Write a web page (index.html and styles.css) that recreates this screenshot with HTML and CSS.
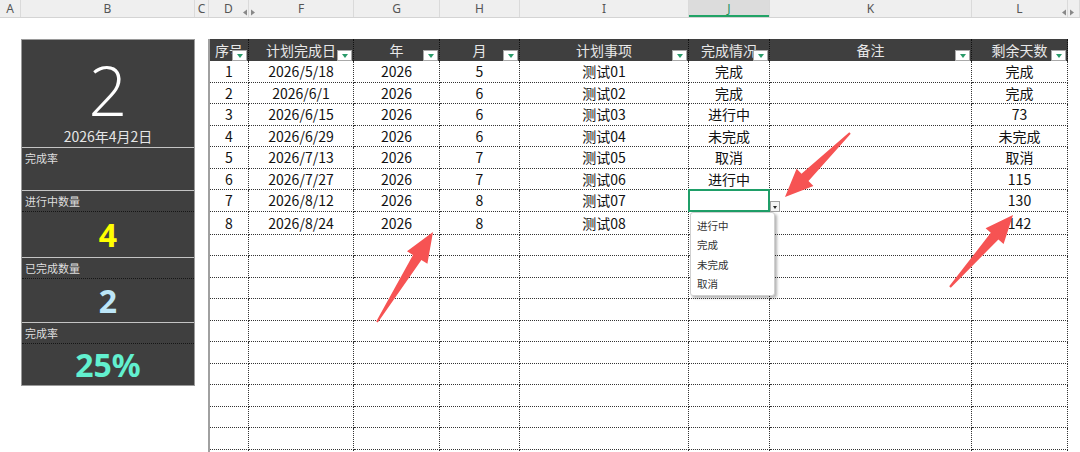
FILE: index.html
```html
<!DOCTYPE html>
<html lang="zh-CN">
<head>
    <meta charset="UTF-8">
    <title>计划完成表</title>
    <link rel="stylesheet" href="styles.css">
</head>
<body>
    <div class="colbar">
        <div>A</div>
        <div>B</div>
        <div>C</div>
        <div>D</div>
        <div>F<svg class="hid" width="12" height="7" viewBox="0 0 12 7"><polygon points="0,3.5 4,0.5 4,6.5"/><polygon points="8,0.5 12,3.5 8,6.5"/></svg></div>
        <div>G</div>
        <div>H</div>
        <div>I</div>
        <div class="cur">J</div>
        <div>K</div>
        <div>L</div>
        <div><svg class="hid" width="12" height="7" viewBox="0 0 12 7"><polygon points="0,3.5 4,0.5 4,6.5"/><polygon points="8,0.5 12,3.5 8,6.5"/></svg></div>
    </div>

    <div class="sheet">
        <div class="panel">
            <div class="hero">
                <div class="big">2</div>
                <div class="date">2026年4月2日</div>
            </div>
            <div class="stat empty">
                <div class="lbl">完成率</div>
            </div>
            <div class="stat">
                <div class="lbl">进行中数量</div>
                <div class="val val-a yellow">4</div>
            </div>
            <div class="stat">
                <div class="lbl">已完成数量</div>
                <div class="val val-b blue">2</div>
            </div>
            <div class="stat">
                <div class="lbl">完成率</div>
                <div class="val val-c aqua">25%</div>
            </div>
        </div>

        <div class="grid">
            <div class="th">序号<span class="flt"></span></div>
            <div class="th">计划完成日<span class="flt"></span></div>
            <div class="th">年<span class="flt"></span></div>
            <div class="th">月<span class="flt"></span></div>
            <div class="th">计划事项<span class="flt"></span></div>
            <div class="th">完成情况<span class="flt"></span></div>
            <div class="th">备注<span class="flt"></span></div>
            <div class="th">剩余天数<span class="flt"></span></div>

            <div>1</div><div>2026/5/18</div><div>2026</div><div>5</div><div>测试01</div><div>完成</div><div></div><div>完成</div>
            <div>2</div><div>2026/6/1</div><div>2026</div><div>6</div><div>测试02</div><div>完成</div><div></div><div>完成</div>
            <div>3</div><div>2026/6/15</div><div>2026</div><div>6</div><div>测试03</div><div>进行中</div><div></div><div>73</div>
            <div>4</div><div>2026/6/29</div><div>2026</div><div>6</div><div>测试04</div><div>未完成</div><div></div><div>未完成</div>
            <div>5</div><div>2026/7/13</div><div>2026</div><div>7</div><div>测试05</div><div>取消</div><div></div><div>取消</div>
            <div>6</div><div>2026/7/27</div><div>2026</div><div>7</div><div>测试06</div><div>进行中</div><div></div><div>115</div>
            <div>7</div><div>2026/8/12</div><div>2026</div><div>8</div><div>测试07</div>
            <div class="sel">
                <span class="dd-btn"></span>
                <ul class="dd-list">
                    <li>进行中</li>
                    <li>完成</li>
                    <li>未完成</li>
                    <li>取消</li>
                </ul>
            </div>
            <div></div><div>130</div>
            <div>8</div><div>2026/8/24</div><div>2026</div><div>8</div><div>测试08</div><div></div><div></div><div>142</div>

            <div></div><div></div><div></div><div></div><div></div><div></div><div></div><div></div>
            <div></div><div></div><div></div><div></div><div></div><div></div><div></div><div></div>
            <div></div><div></div><div></div><div></div><div></div><div></div><div></div><div></div>
            <div></div><div></div><div></div><div></div><div></div><div></div><div></div><div></div>
            <div></div><div></div><div></div><div></div><div></div><div></div><div></div><div></div>
            <div></div><div></div><div></div><div></div><div></div><div></div><div></div><div></div>
            <div></div><div></div><div></div><div></div><div></div><div></div><div></div><div></div>
            <div></div><div></div><div></div><div></div><div></div><div></div><div></div><div></div>
            <div></div><div></div><div></div><div></div><div></div><div></div><div></div><div></div>
            <div></div><div></div><div></div><div></div><div></div><div></div><div></div><div></div>
            <div></div><div></div><div></div><div></div><div></div><div></div><div></div><div></div>
        </div>
    </div>

    <svg class="arrows" width="1080" height="452" viewBox="0 0 1080 452">
        <polygon points="376.2,321.5 413.0,254.9 407.0,251.2 433,232 427.4,263.8 421.4,260.1 377.8,322.5"/>
        <polygon points="949.2,286.3 990.8,232.8 985.6,228.2 1013,215 1003.6,244.0 998.4,239.4 950.8,287.7"/>
        <polygon points="849.3,132.3 801.5,173.7 796.6,168.7 785,197 813.4,185.9 808.5,180.9 850.7,133.7"/>
    </svg>
</body>
</html>
```

FILE: styles.css
```css
* {
    margin: 0;
    padding: 0;
    box-sizing: border-box;
}

body {
    width: 1080px;
    height: 452px;
    overflow: hidden;
    position: relative;
    background: #fff;
    font-family: "Noto Sans CJK SC", "Noto Sans", sans-serif;
    color: #111;
}

/* column letters bar */
.colbar {
    display: grid;
    grid-template-columns: 21px 174px 14px 40px 105px 86px 80px 169px 81px 202px 96px 1fr;
    height: 18px;
    background: #efefef;
    border-bottom: 1px solid #d4d4d4;
}

.colbar div {
    position: relative;
    border-right: 1px solid #dadada;
    font: 12px/17px "Noto Sans", sans-serif;
    color: #555;
    text-align: center;
}

.colbar .cur {
    background: #dcdcdc;
    color: #1e8f5e;
    box-shadow: inset 0 -2px #21a366;
}

.hid {
    position: absolute;
    left: -6px;
    top: 9px;
    fill: #888;
}

/* sheet */
.sheet {
    display: flex;
    align-items: flex-start;
    padding: 21px 0 0 21px;
}

.panel {
    width: 174px;
    border: 1px solid #9a9a9a;
    background: #3f3f3f;
    color: #e6e6e6;
}

.hero {
    height: 107px;
    text-align: center;
}

.hero .big {
    font-family: "Open Sans", "Noto Sans", sans-serif;
    font-weight: 300;
    font-size: 68px;
    line-height: 74px;
    height: 87px;
    padding-top: 13px;
    color: #fff;
}

.hero .date {
    font-size: 14px;
    line-height: 18px;
}

.stat {
    border-top: 1px solid #c4c4c4;
}

.stat .lbl {
    height: 21px;
    padding-left: 3px;
    font-size: 11px;
    line-height: 20px;
    color: #dedede;
    border-bottom: 1px dotted #151515;
}

.stat.empty {
    height: 43px;
}

.stat.empty .lbl {
    border-bottom: none;
}

.val {
    display: flex;
    align-items: center;
    justify-content: center;
    font-family: "Noto Sans", "Noto Sans CJK SC", sans-serif;
    font-weight: bold;
    font-size: 32px;
}

.val-a { height: 45px; }
.val-b { height: 43px; }
.val-c { height: 41px; }

.yellow { color: #ffff00; }
.blue { color: #bde6f8; }
.aqua { color: #62f0cf; }

/* table */
.grid {
    display: grid;
    grid-template-columns: 39px 105px 86px 80px 169px 81px 202px 96px;
    grid-template-rows: 22px repeat(7, 21.5px) 23.3px;
    grid-auto-rows: 21.5px;
    margin-left: 13px;
    border-left: 2px solid #a0a0a0;
}

.grid > div {
    display: flex;
    align-items: center;
    justify-content: center;
    border-right: 1px dotted #333;
    border-bottom: 1px dotted #333;
    font-size: 14px;
    white-space: nowrap;
}

.grid > .th {
    position: relative;
    background: #3f3f3f;
    color: #e8e8e8;
    border-right: 1px dotted #111;
    border-bottom: none;
    overflow: hidden;
}

.flt {
    position: absolute;
    right: 1px;
    bottom: 0;
    width: 15px;
    height: 11px;
    background: #fff;
    border: 1px solid #a8a8a8;
}

.flt::after {
    content: "";
    position: absolute;
    left: 4px;
    top: 3px;
    border-left: 3px solid transparent;
    border-right: 3px solid transparent;
    border-top: 4px solid #2a9b6a;
}

/* selected cell with validation list */
.grid > .sel {
    position: relative;
    z-index: 2;
}

.sel::before {
    content: "";
    position: absolute;
    left: -1px;
    top: -1px;
    right: -1px;
    bottom: -1px;
    border: 2px solid #1f9e68;
}

.dd-btn {
    position: absolute;
    left: 100%;
    bottom: -1px;
    margin-left: 1px;
    width: 10px;
    height: 11px;
    background: #f4f4f4;
    border: 1px solid #a0a0a0;
}

.dd-btn::after {
    content: "";
    position: absolute;
    left: 2px;
    top: 4px;
    border-left: 2.5px solid transparent;
    border-right: 2.5px solid transparent;
    border-top: 3px solid #222;
}

.dd-list {
    position: absolute;
    left: 1px;
    top: 100%;
    margin-top: 1px;
    width: 85px;
    height: 84px;
    list-style: none;
    padding: 3px 0 0 6px;
    background: #fff;
    border: 1px solid #d0d0d0;
    border-radius: 3px;
    box-shadow: 2px 2px 3px rgba(0, 0, 0, 0.3);
}

.dd-list li {
    font-size: 10.5px;
    line-height: 19.5px;
    color: #333;
}

/* callout arrows */
.arrows {
    position: absolute;
    left: 0;
    top: 0;
    z-index: 5;
    pointer-events: none;
    fill: #f65353;
}
```
